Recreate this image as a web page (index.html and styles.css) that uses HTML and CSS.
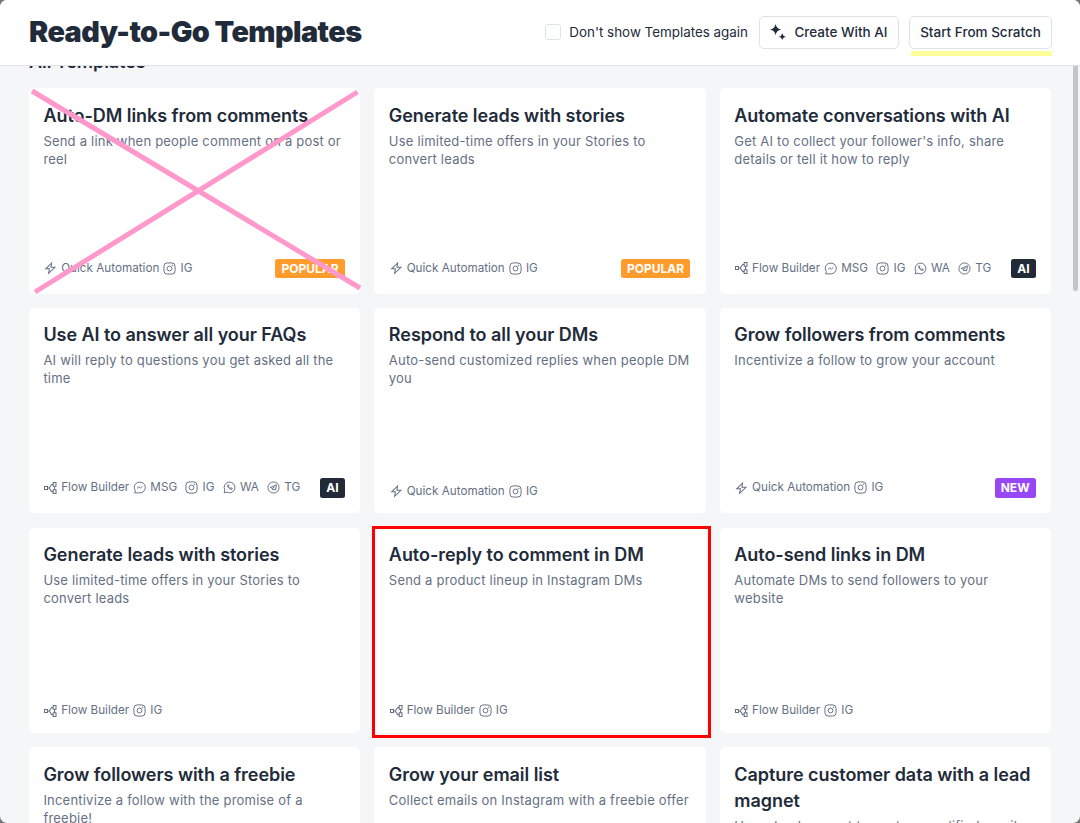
FILE: index.html
```
<!DOCTYPE html>
<html lang="en">
<head>
<meta charset="utf-8">
<title>Ready-to-Go Templates</title>
<link rel="stylesheet" href="styles.css">
</head>
<body>
<svg class="sprite" aria-hidden="true">
  <symbol id="i-bolt" viewBox="0 0 14 14"><path d="M8.600 2 2.700 7.800h3.700L5.600 12.300l6.300-6H8z"/></symbol>
  <symbol id="i-flow" viewBox="0 0 14 14"><path d="M1.500 5.500h3v3h-3zM10.200 1.500h2.800v3.800h-2.800zM10.200 8.700h2.800v3.800h-2.800zM11.600 5.300v3.400M4.500 7h1.700M10.200 3.400H8.700L6.200 7l2.500 3.600h1.500"/></symbol>
  <symbol id="i-ig" viewBox="0 0 14 14"><rect x="1" y="1" width="12" height="12" rx="3.5"/><circle cx="7" cy="7" r="2.6"/><circle cx="10.400" cy="3.600" r=".4"/></symbol>
  <symbol id="i-msg" viewBox="0 0 14 14"><path d="M7.300 1.200C3.800 1.200 1.300 3.600 1.300 6.700c0 1.600.5 2.700 1.300 3.600L1.800 12.800h5.500c3.400 0 5.900-2.600 5.900-5.900s-2.500-5.700-5.900-5.700z"/><path d="m4.400 8 2-1.800 1.600 1.400 2.100-1.800"/></symbol>
  <symbol id="i-wa" viewBox="0 0 14 14"><path d="m1.200 12.800.8-3a5.800 5.800 0 1 1 2.200 2.200z"/><path d="M5 4.300c-.8 1.700 2.200 5.100 4.700 4.700l.3-1-1.500-.7-.8.700C7 7.900 6.200 7 5.800 6.100l.7-.7-.6-1.300z"/></symbol>
  <symbol id="i-tg" viewBox="0 0 14 14"><circle cx="7" cy="7" r="6"/><path d="M3.500 7 10.200 4.200 9.200 9.700 7.500 8.600 6.400 9.800 5.900 7.900zM5.900 7.900 8.200 6.200"/></symbol>
</svg>

<div class="modal">
  <header class="modal-header">
    <h1>Ready-to-Go Templates</h1>
    <div class="actions">
      <label class="dont-show"><span class="checkbox"></span><span class="label-text">Don't show Templates again</span></label>
      <button class="btn btn-ai">
        <svg class="sparkle" viewBox="0 0 16 16"><path d="M5.600 0Q6.400 4.800 11.200 5.600 6.400 6.400 5.600 11.200 4.800 6.400 0 5.600 4.800 4.800 5.600 0zM12.300 9.200Q12.900 12.100 15.800 12.700 12.900 13.300 12.300 16 11.700 13.300 8.800 12.700 11.700 12.100 12.300 9.200z"/></svg>
        <span class="label-text">Create With AI</span>
      </button>
      <button class="btn btn-scratch"><span class="label-text">Start From Scratch</span></button>
    </div>
  </header>

  <main class="modal-body">
    <h2>All Templates</h2>
    <div class="grid" id="grid"></div>
    <div class="scroll-thumb"></div>
  </main>
</div>

<script>
const ALL = ["msg", "ig", "wa", "tg"];

const templates = [
  { title: "Auto-DM links from comments", text: "Send a link when people comment on a post or reel", type: "quick", channels: ["ig"], badge: "popular", mark: "crossed" },
  { title: "Generate leads with stories", text: "Use limited-time offers in your Stories to convert leads", type: "quick", channels: ["ig"], badge: "popular" },
  { title: "Automate conversations with AI", text: "Get AI to collect your follower's info, share details or tell it how to reply", type: "flow", channels: ALL, badge: "ai" },
  { title: "Use AI to answer all your FAQs", text: "AI will reply to questions you get asked all the time", type: "flow", channels: ALL, badge: "ai" },
  { title: "Respond to all your DMs", text: "Auto-send customized replies when people DM you", type: "quick", channels: ["ig"] },
  { title: "Grow followers from comments", text: "Incentivize a follow to grow your account", type: "quick", channels: ["ig"], badge: "new" },
  { title: "Generate leads with stories", text: "Use limited-time offers in your Stories to convert leads", type: "flow", channels: ["ig"] },
  { title: "Auto-reply to comment in DM", text: "Send a product lineup in Instagram DMs", type: "flow", channels: ["ig"], mark: "boxed" },
  { title: "Auto-send links in DM", text: "Automate DMs to send followers to your website", type: "flow", channels: ["ig"] },
  { title: "Grow followers with a freebie", text: "Incentivize a follow with the promise of a freebie!" },
  { title: "Grow your email list", text: "Collect emails on Instagram with a freebie offer" },
  { title: "Capture customer data with a lead magnet", text: "Use a lead magnet to capture qualified emails" }
];

const types = {
  quick: { icon: "bolt", label: "Quick Automation" },
  flow: { icon: "flow", label: "Flow Builder" }
};

const icon = name => `<svg class="icon"><use href="#i-${name}"/></svg>`;

const cross = `<svg class="cross" viewBox="0 0 331 206"><path d="M3 3 331 200M328.500 4 6 204"/></svg>`;

const footer = t => `
    <div class="card-footer">
      <span class="tag type">${icon(types[t.type].icon)}${types[t.type].label}</span>
      <span class="channels">${t.channels.map(c => `<span class="tag">${icon(c)}${c.toUpperCase()}</span>`).join("")}</span>
      ${t.badge ? `<span class="badge ${t.badge}">${t.badge.toUpperCase()}</span>` : ""}
    </div>`;

document.getElementById("grid").innerHTML = templates.map(t => `
  <article class="card ${t.mark || ""}">
    <h3>${t.title}</h3>
    <p>${t.text}</p>
    ${t.type ? footer(t) : ""}
    ${t.mark === "crossed" ? cross : ""}
  </article>
`).join("");
</script>
</body>
</html>
```
FILE: styles.css
```
* {
  box-sizing: border-box;
}

body {
  margin: 0;
  height: 823px;
  overflow: hidden;
  background: #747474;
  color: #222b3a;
  font-family: Inter, "Liberation Sans", sans-serif;
}

.sprite {
  display: none;
}

.modal {
  height: 823px;
  display: flex;
  flex-direction: column;
  border-radius: 7px;
  overflow: hidden;
  background: #f5f6f8;
}

.modal-header {
  height: 66px;
  flex-shrink: 0;
  display: flex;
  align-items: center;
  justify-content: space-between;
  padding: 0 28px 0 29px;
  background: #fff;
  border-bottom: 1px solid #dfe2e7;
}

h1 {
  margin: -1px 0 0;
  font-size: 28.8px;
  font-weight: 900;
  line-height: 36px;
  letter-spacing: -0.55px;
  white-space: nowrap;
}

.actions {
  display: flex;
  align-items: center;
  gap: 10px;
}

.dont-show {
  display: flex;
  align-items: center;
  gap: 8px;
  margin-right: 1px;
  font-size: 13.4px;
}

.checkbox {
  width: 16px;
  height: 16px;
  margin-top: -1px;
  border: 1px solid #dfe2e9;
  border-radius: 3px;
}

.label-text {
  padding-bottom: 2px;
}

.btn {
  position: relative;
  display: flex;
  align-items: center;
  justify-content: center;
  height: 33px;
  padding: 0 10px;
  border: 1px solid #dfe2e9;
  border-radius: 5px;
  background: #fff;
  color: inherit;
  font: 450 13.5px Inter, "Liberation Sans", sans-serif;
  white-space: nowrap;
}

.btn-ai {
  width: 140px;
  gap: 8px;
}

.btn-scratch {
  width: 143px;
}

.sparkle {
  width: 16px;
  height: 16px;
  flex-shrink: 0;
  margin-top: -1px;
  fill: #222b3a;
}

/* highlighter stroke under the button */
.btn-scratch::after {
  content: "";
  position: absolute;
  left: 1px;
  right: -1px;
  top: 34px;
  height: 5px;
  background: #ffff99;
}

.modal-body {
  position: relative;
  flex: 1;
  min-height: 0;
  overflow: hidden;
  padding: 0 29px;
}

h2 {
  margin: -16px 0 14.4px;
  font-size: 18px;
  font-weight: 600;
  line-height: 24px;
  letter-spacing: -0.06px;
}

.grid {
  display: grid;
  grid-template-columns: repeat(3, 1fr);
  grid-auto-rows: 205.2px;
  gap: 14.4px;
}

.card {
  position: relative;
  display: flex;
  flex-direction: column;
  padding: 14.4px;
  border-radius: 5px;
  background: #fff;
}

.card h3 {
  margin: 0;
  font-size: 18px;
  font-weight: 600;
  line-height: 26px;
  letter-spacing: -0.05px;
}

.card p {
  margin: 3px 0 0;
  color: #657084;
  font-size: 13px;
  line-height: 18px;
  letter-spacing: 0.21px;
}

.card-footer {
  display: flex;
  align-items: center;
  margin-top: auto;
  color: #657084;
  font-size: 11.7px;
  line-height: 15px;
}

.tag {
  display: flex;
  align-items: center;
  gap: 4.2px;
  white-space: nowrap;
}

.type {
  gap: 3.8px;
  margin-right: 4px;
}

.type .icon {
  width: 14px;
  height: 14px;
}

.channels {
  display: flex;
  gap: 8.3px;
}

.icon {
  width: 13px;
  height: 13px;
  fill: none;
  stroke: #657084;
  stroke-width: 1.05;
}

.badge {
  margin: 1px 1px 1px auto;
  padding: 0 6px;
  border-radius: 2.5px;
  color: #fff;
  font-size: 12px;
  font-weight: 700;
  line-height: 19.6px;
}

.popular {
  background: #ff9c2b;
}

.ai {
  background: #222937;
}

.new {
  background: #9747f5;
}

/* hand-drawn marks over the cards */
.cross {
  position: absolute;
  left: 0;
  top: 0;
  width: 331px;
  height: 206px;
  overflow: visible;
  fill: none;
  stroke: #ff99cb;
  stroke-width: 5;
}

.boxed::after {
  content: "";
  position: absolute;
  inset: -2px -5px -5px -2px;
  border: 3px solid #ff0000;
}

.scroll-thumb {
  position: absolute;
  right: 2px;
  top: 0;
  width: 5px;
  height: 225px;
  border-radius: 0 0 3px 3px;
  background: #c4c5c6;
}
```
